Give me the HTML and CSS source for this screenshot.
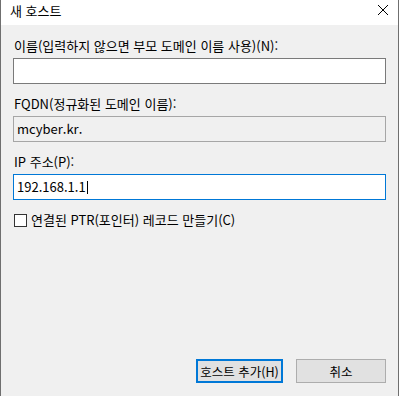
FILE: index.html
```html
<!DOCTYPE html>
<html lang="ko">
<head>
<meta charset="utf-8">
<title>새 호스트</title>
<link rel="stylesheet" href="styles.css">
</head>
<body>
<div class="window">
  <div class="titlebar">
    <span class="title">새 호스트</span>
    <svg class="close" width="12" height="12" viewBox="0 0 12 12" aria-hidden="true">
      <path d="M1 1 L11 11 M11 1 L1 11" stroke="#000" stroke-width="1" fill="none"/>
    </svg>
  </div>
  <div class="content">
    <div class="label first">이름(입력하지 않으면 부모 도메인 이름 사용)(N):</div>
    <div class="field"></div>

    <div class="label">FQDN(정규화된 도메인 이름):</div>
    <div class="field readonly">mcyber.kr.</div>

    <div class="label">IP 주소(P):</div>
    <div class="field focused">192.168.1.1<span class="caret"></span></div>

    <div class="check-row">
      <span class="checkbox"></span>
      <span class="check-label">연결된 PTR(포인터) 레코드 만들기(C)</span>
    </div>

    <div class="buttons">
      <div class="btn default">호스트 추가(H)</div>
      <div class="btn cancel">취소</div>
    </div>
  </div>
</div>
</body>
</html>
```
FILE: styles.css
```css
html, body {
  margin: 0;
  padding: 0;
  background: #ffffff;
}
body {
  font-family: "Noto Sans CJK KR", "Noto Sans", sans-serif;
  font-size: 13px;
  color: #000;
}
.window {
  width: 397px;
  height: 396px;
  border-left: 1px solid #6f6f6f;
  border-right: 1px solid #6f6f6f;
  display: flex;
  flex-direction: column;
  overflow: hidden;
}
.titlebar {
  height: 25px;
  background: #fff;
  display: flex;
  align-items: flex-start;
  justify-content: space-between;
  flex-shrink: 0;
}
.title {
  margin-left: 9px;
  margin-top: 3px;
  line-height: 16px;
}
.close {
  margin-top: 4px;
  margin-right: 9px;
}
.content {
  flex: 1;
  background: #f0f0f0;
  padding: 0 12px 13px 12px;
  display: flex;
  flex-direction: column;
}
.label {
  line-height: 16px;
  height: 16px;
  padding-left: 1px;
  margin-top: 12px;
  margin-bottom: 4px;
  white-space: nowrap;
}
.label.first {
  margin-top: 13px;
}
.field {
  height: 24px;
  border: 1px solid #7a7a7a;
  background: #fff;
  padding-left: 3px;
  line-height: 24px;
  display: flex;
  align-items: center;
}
.field.readonly {
  background: #f0f0f0;
  border-color: #a6a6a6;
}
.field.focused {
  border-color: #0078d7;
}
.caret {
  display: inline-block;
  width: 1px;
  height: 13px;
  background: #000;
  margin-left: 1px;
}
.check-row {
  display: flex;
  align-items: center;
  margin-top: 12px;
  height: 16px;
  line-height: 16px;
}
.checkbox {
  width: 11px;
  height: 11px;
  border: 1px solid #333;
  background: #fff;
  margin-left: 1px;
}
.check-label {
  margin-left: 4px;
  white-space: nowrap;
}
.buttons {
  margin-top: auto;
  display: flex;
  justify-content: flex-end;
  gap: 13px;
}
.btn {
  height: 24px;
  box-sizing: border-box;
  background: #e1e1e1;
  display: flex;
  align-items: center;
  justify-content: center;
  white-space: nowrap;
  font-size: 12.5px;
}
.btn.default {
  width: 87px;
  border: 2px solid #0078d7;
}
.btn.cancel {
  width: 90px;
  border: 1px solid #adadad;
}
```
